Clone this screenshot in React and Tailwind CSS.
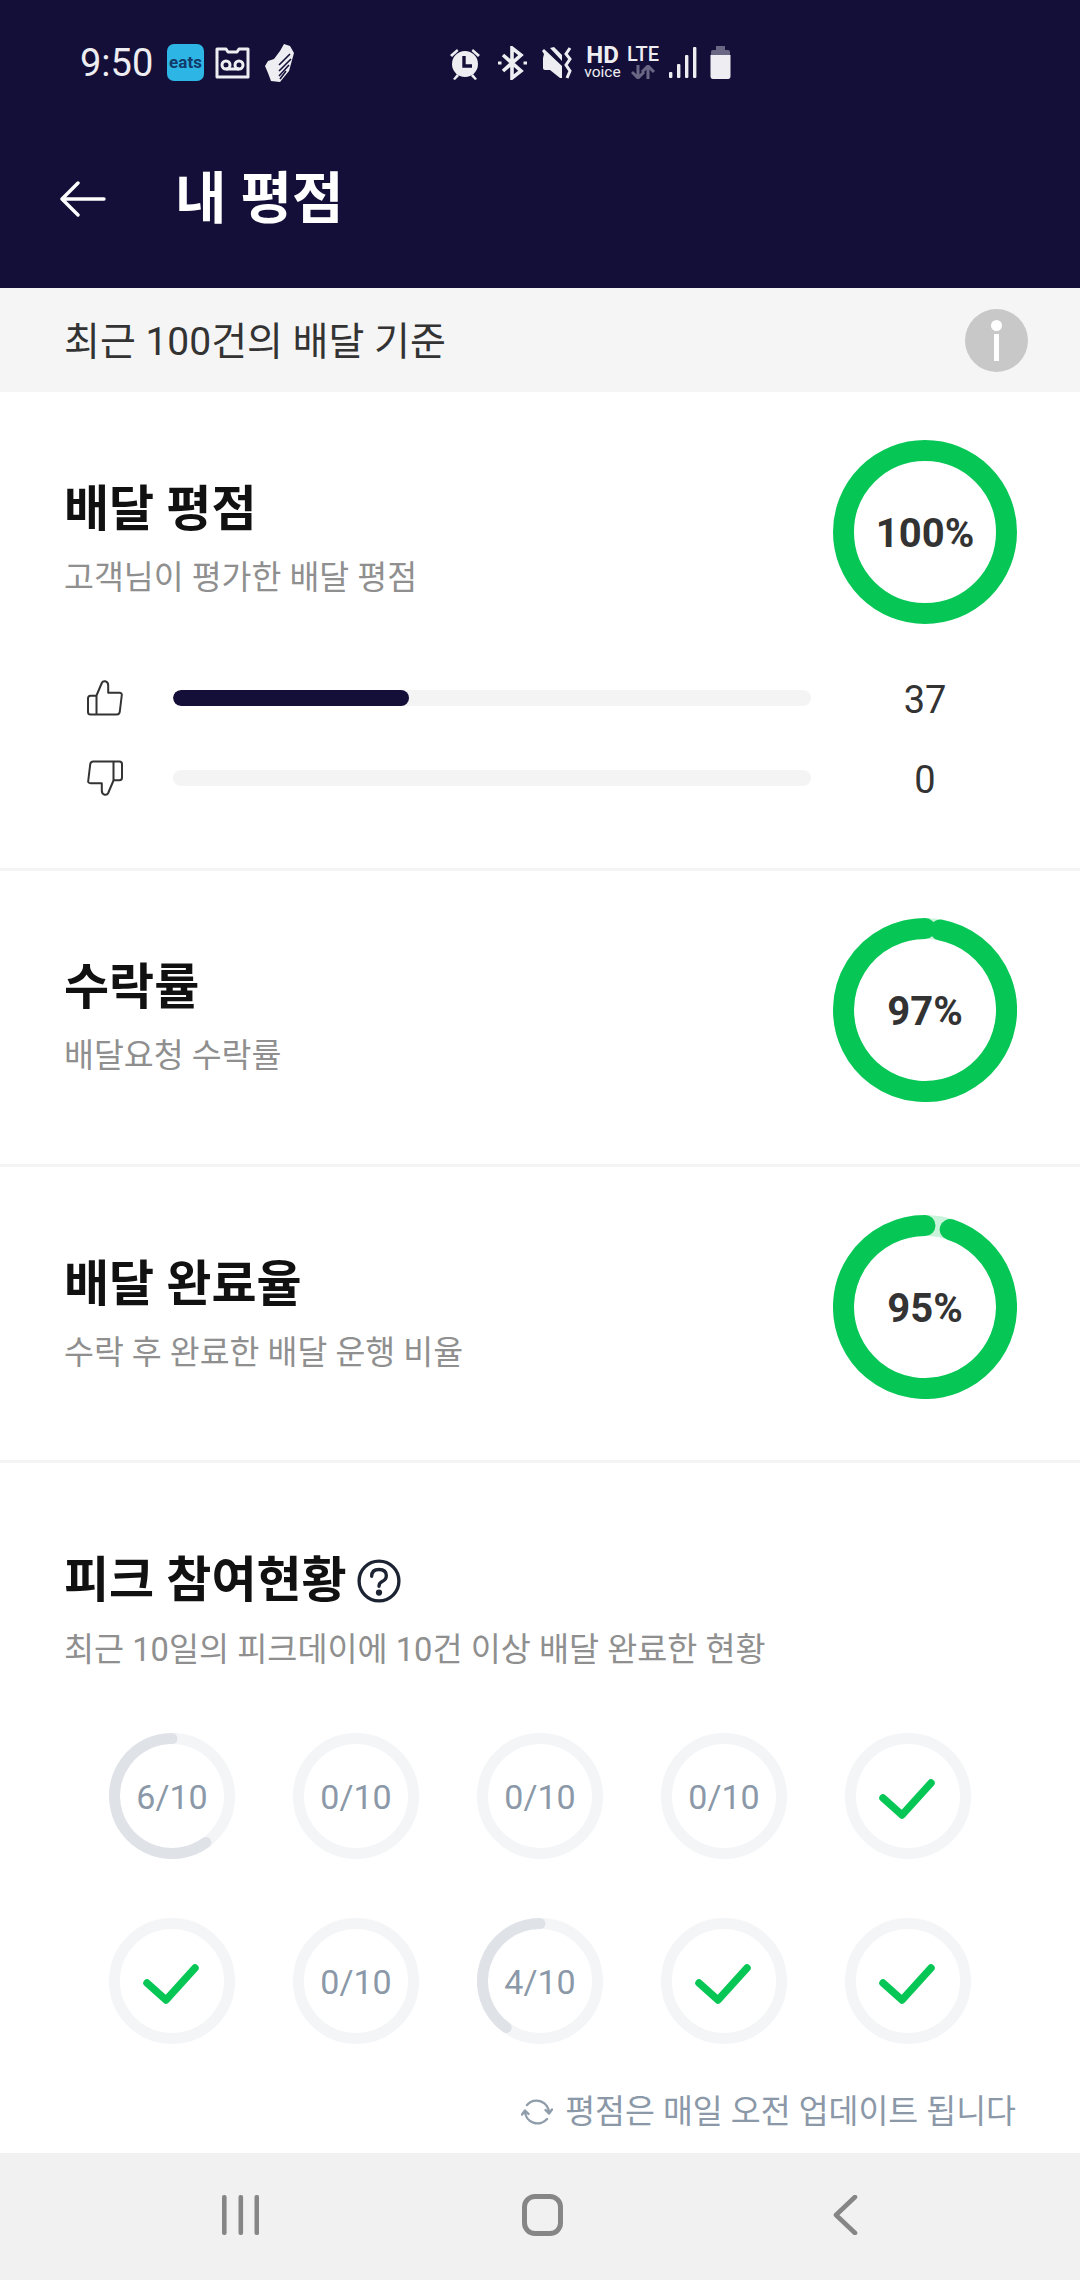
import React from 'react';

const FONT = 'font-[Roboto,"Noto_Sans_CJK_KR",sans-serif]';

// Arc runs counter-clockwise from the top, same as the app's progress rings
const arcPath = (c, r, pct) => {
    const a = 2 * Math.PI * pct;
    const x = c - r * Math.sin(a);
    const y = c - r * Math.cos(a);
    return `M${c} ${c - r} A${r} ${r} 0 ${pct > 0.5 ? 1 : 0} 0 ${x.toFixed(2)} ${y.toFixed(2)}`;
};

const ScoreRing = ({ pct }) => (
    <div className="relative w-[184px] h-[184px] shrink-0 flex items-center justify-center">
        <svg className="absolute inset-0" width="184" height="184" viewBox="0 0 184 184" fill="none">
            <circle cx="92" cy="92" r="81.5" stroke={pct === 100 ? '#06c755' : '#c9f3da'} strokeWidth="21" />
            {pct < 100 && (
                <path d={arcPath(92, 81.5, pct / 100)} stroke="#06c755" strokeWidth="21" strokeLinecap="round" />
            )}
        </svg>
        <span className="relative text-[40px] font-bold text-[#333333] leading-none mt-[3px]">{pct}%</span>
    </div>
);

const PeakRing = ({ done, count }) => (
    <div className="relative w-[126px] h-[126px] flex items-center justify-center">
        <svg className="absolute inset-0" width="126" height="126" viewBox="0 0 126 126" fill="none">
            <circle cx="63" cy="63" r="57.5" stroke="#f3f5f7" strokeWidth="11" />
            {count > 0 && !done && (
                <path d={arcPath(63, 57.5, count / 10)} stroke="#dfe3e8" strokeWidth="11" strokeLinecap="round" />
            )}
            {done && (
                <path d="M38 65 L57 82 L86 50" stroke="#06c755" strokeWidth="7.5" strokeLinecap="round" strokeLinejoin="round" />
            )}
        </svg>
        {!done && <span className="relative text-[34px] text-[#8b98a8] leading-none mt-[2px]">{count}/10</span>}
    </div>
);

const ThumbIcon = ({ down }) => (
    <svg className={down ? 'rotate-180' : ''} width="36" height="36" viewBox="0 0 36 36" fill="none" stroke="#333333" strokeWidth="2" strokeLinejoin="round">
        <path d="M9.5 15.5 L14.8 3 Q15.8 .8 18.3 1.3 Q21.2 2 21.2 5.5 V12.8 H32.5 Q35 12.8 34.8 15 L32.8 31.5 Q32.5 34.5 29.8 34.5 H3.5 Q1 34.5 1 32 V18.5 Q1 15.7 3.5 15.7 H9.5 V34.5" />
    </svg>
);

const RatingRow = ({ down, width, value }) => (
    <div className="flex items-center h-[80px]">
        <div className="w-[109px] pl-[23px]"><ThumbIcon down={down} /></div>
        <div className="w-[638px] h-[16px] rounded-full bg-[#f4f4f4] overflow-hidden">
            <div className="h-full rounded-full bg-[#140f38]" style={{ width }} />
        </div>
        <span className="w-[228px] text-center text-[38px] text-[#333333] leading-none mt-[3px]">{value}</span>
    </div>
);

const ScoreHead = ({ title, sub, pct }) => (
    <div className="flex justify-between">
        <div className="mt-[40px]">
            <h2 className="text-[49px] leading-[60px] font-bold text-[#111111]">{title}</h2>
            <p className="mt-[13px] text-[32.5px] leading-[50px] text-[#8f8f8f]">{sub}</p>
        </div>
        <ScoreRing pct={pct} />
    </div>
);

const StatusBar = () => (
    <div className="flex items-center h-[37px] mt-[44px] pl-[80px] text-[#eeeef2]">
        <span className="w-[87px] text-[38px] leading-none">9:50</span>
        <div className="w-[37px] h-[37px] rounded-[7px] bg-[#2cb5e5] flex items-center justify-center text-[17px] font-bold text-[#123a6b] leading-none">eats</div>
        <svg className="ml-[11px]" width="35" height="32" viewBox="0 0 35 32" fill="none" stroke="#eeeef2" strokeWidth="3">
            <path d="M2 2 H11 L13 5 H22 L24 2 H33 V30 H2 Z" strokeLinejoin="round" />
            <circle cx="11" cy="18" r="4" />
            <circle cx="24" cy="18" r="4" />
            <path d="M11 22 H24" />
        </svg>
        <svg className="ml-[15px]" width="30" height="38" viewBox="0 0 30 38">
            <path d="M19 0 L25 2 L29 9 L24 27 L15 38 L6 37 L3 29 L0 22 L3 17 L9 15 L15 7 Z" fill="#eeeef2" />
            <path d="M25 10 L14 21 M26 15 L14 27 M24 21 L14 32 M21 27 L15 35" stroke="#140f38" strokeWidth="1.6" fill="none" />
        </svg>
        <svg className="ml-[154px]" width="32" height="34" viewBox="0 0 32 34" fill="#eeeef2">
            <circle cx="16" cy="18" r="13" />
            <path d="M1 9 L8 3 L9.5 5 L3 11 Z M31 9 L24 3 L22.5 5 L29 11 Z M4 33 L8 28 L10 30 L6 34 Z M28 33 L24 28 L22 30 L26 34 Z" />
            <path d="M15 10 V20 H23" stroke="#140f38" strokeWidth="3.4" fill="none" />
        </svg>
        <svg className="ml-[17px]" width="29" height="34" viewBox="0 0 29 34" fill="none" stroke="#eeeef2" strokeWidth="3.6">
            <path d="M5 9 L23 25 L14 32 V2 L23 9 L5 25" />
            <path d="M0 17 H3.5 M25.5 17 H29" strokeWidth="3" />
        </svg>
        <svg className="ml-[15px]" width="31" height="34" viewBox="0 0 31 34" fill="#eeeef2">
            <path d="M1 12 L2 8 L0 5 L2 3 L20 20 V32 H18 L8 24 H3 Q1 24 1 22 Z M8 2 L12 1 L20 9 V15 Z" />
            <path d="M28 2 L24 8 L28 13 L24 19 L28 25 L25 32" stroke="#eeeef2" strokeWidth="3" fill="none" />
        </svg>
        <div className="ml-[13px] w-[33px] flex flex-col items-center">
            <span className="text-[24px] leading-[18px] font-bold">HD</span>
            <span className="text-[15.5px] leading-[15px] font-normal mt-[1px]">voice</span>
        </div>
        <div className="ml-[9px] w-[30px] flex flex-col items-center">
            <span className="text-[20px] leading-[16px] font-medium">LTE</span>
            <svg className="mt-[3px]" width="24" height="14" viewBox="0 0 24 14" fill="none" stroke="#6a6785" strokeWidth="3">
                <path d="M7 0 V12 M1 7 L7 13 L13 7 M17 14 V2 M11 7 L17 1 L23 7" />
            </svg>
        </div>
        <svg className="ml-[11px]" width="28" height="31" viewBox="0 0 28 31" fill="#eeeef2">
            <rect x="0" y="25" width="3.4" height="6" rx="1" />
            <rect x="8" y="17" width="3.4" height="14" rx="1" />
            <rect x="16" y="8" width="3.4" height="23" rx="1" />
            <rect x="24" y="0" width="3.4" height="31" rx="1" />
        </svg>
        <svg className="ml-[13px]" width="21" height="33" viewBox="0 0 21 33">
            <path d="M6 0 H15 V4 H6 Z M1 6 Q1 4 3 4 H18 Q20 4 20 6 V9 H1 Z" fill="#6a6785" />
            <path d="M0.5 9 H20.5 V30 Q20.5 33 18 33 H3 Q0.5 33 0.5 30 Z" fill="#eeeef2" />
        </svg>
    </div>
);

const App = () => {
    const peaks = [
        { count: 6 }, { count: 0 }, { count: 0 }, { count: 0 }, { done: true },
        { done: true }, { count: 0 }, { count: 4 }, { done: true }, { done: true },
    ];

    return (
        <div className={`w-[1080px] h-[2280px] flex flex-col bg-white overflow-hidden ${FONT}`}>
            {/* Header */}
            <header className="h-[288px] shrink-0 bg-[#140f38]">
                <StatusBar />
                <div className="flex items-center mt-[80px] pl-[60px]">
                    <svg width="46" height="36" viewBox="0 0 46 36" fill="none" stroke="#ffffff" strokeWidth="3.4" strokeLinecap="round" strokeLinejoin="round">
                        <path d="M44 18 H3 M18 2 L2 18 L18 34" />
                    </svg>
                    <h1 className="ml-[69px] text-[56px] leading-[76px] font-bold text-white">내 평점</h1>
                </div>
            </header>

            {/* Criteria bar */}
            <div className="h-[104px] shrink-0 bg-[#f5f5f5] flex items-center justify-between pl-[64px] pr-[52px]">
                <span className="text-[39px] text-[#333333] leading-[56px] mt-[4px]">최근 100건의 배달 기준</span>
                <div className="w-[63px] h-[63px] rounded-full bg-[#c8c8c8] flex flex-col items-center justify-center">
                    <span className="w-[11px] h-[11px] rounded-full bg-white" />
                    <span className="w-[5px] h-[27px] mt-[3px] bg-white" />
                </div>
            </div>

            {/* Delivery rating */}
            <section className="h-[479px] shrink-0 pt-[48px] pl-[64px] pr-[63px] border-b-[3px] border-[#f4f4f4]">
                <ScoreHead title="배달 평점" sub="고객님이 평가한 배달 평점" pct={100} />
                <div className="mt-[34px] -mr-[22px]">
                    <RatingRow width="37%" value="37" />
                    <RatingRow down width="0%" value="0" />
                </div>
            </section>

            {/* Acceptance */}
            <section className="h-[296px] shrink-0 pt-[47px] pl-[64px] pr-[63px] border-b-[3px] border-[#f4f4f4]">
                <ScoreHead title="수락률" sub="배달요청 수락률" pct={97} />
            </section>

            {/* Completion */}
            <section className="h-[296px] shrink-0 pt-[48px] pl-[64px] pr-[63px] border-b-[3px] border-[#f4f4f4]">
                <ScoreHead title="배달 완료율" sub="수락 후 완료한 배달 운행 비율" pct={95} />
            </section>

            {/* Peak participation */}
            <section className="flex-1 pt-[88px] px-[64px]">
                <div className="flex items-center">
                    <h2 className="text-[49px] leading-[60px] font-bold text-[#111111]">피크 참여현황</h2>
                    <svg className="ml-[10px]" width="44" height="44" viewBox="0 0 42 42" fill="none" stroke="#1c2433" strokeWidth="3.2" strokeLinecap="round">
                        <circle cx="21" cy="21" r="19" />
                        <path d="M14 16.5 Q14 10 21 10 Q28 10 28 16 Q28 19.5 24 21.5 Q21 23 21 26" />
                        <circle cx="21" cy="32" r="1.4" fill="#1c2433" />
                    </svg>
                </div>
                <p className="mt-[14px] text-[32.7px] leading-[50px] text-[#8f8f8f]">최근 10일의 피크데이에 10건 이상 배달 완료한 현황</p>
                <div className="mt-[58px] -ml-[64px] pl-[80px] grid grid-cols-[repeat(5,184px)] gap-y-[59px] justify-items-center">
                    {peaks.map((p, i) => <PeakRing key={i} done={p.done} count={p.count} />)}
                </div>
                <div className="mt-[43px] flex items-center justify-end h-[50px]">
                    <svg width="32" height="32" viewBox="0 0 32 32" fill="none" stroke="#8f9caa" strokeWidth="2.4" strokeLinecap="round" strokeLinejoin="round">
                        <path d="M6 9 A12.5 12.5 0 0 1 28 17 M31 13.5 L28 17.5 L24.5 14" />
                        <path d="M26 23 A12.5 12.5 0 0 1 4 15 M1 18.5 L4 14.5 L7.5 18" />
                    </svg>
                    <span className="ml-[12px] text-[32.5px] leading-[50px] text-[#8b98a8]">평점은 매일 오전 업데이트 됩니다</span>
                </div>
            </section>

            {/* Android nav bar */}
            <nav className="h-[127px] shrink-0 bg-[#f1f1f1] flex items-center pl-[221px] pb-[4px]">
                <svg width="38" height="40" viewBox="0 0 38 40" fill="#868686">
                    <rect x="1" y="0" width="4.6" height="40" rx="2" />
                    <rect x="17.5" y="0" width="4.6" height="40" rx="2" />
                    <rect x="33.5" y="0" width="4.6" height="40" rx="2" />
                </svg>
                <div className="ml-[263px] w-[41px] h-[42px] rounded-[13px] border-[5px] border-[#868686]" />
                <svg className="ml-[270px]" width="25" height="40" viewBox="0 0 25 40" fill="none" stroke="#868686" strokeWidth="4.6" strokeLinecap="round" strokeLinejoin="round">
                    <path d="M22 2 L3 20 L22 38" />
                </svg>
            </nav>
        </div>
    );
};

export default App;
